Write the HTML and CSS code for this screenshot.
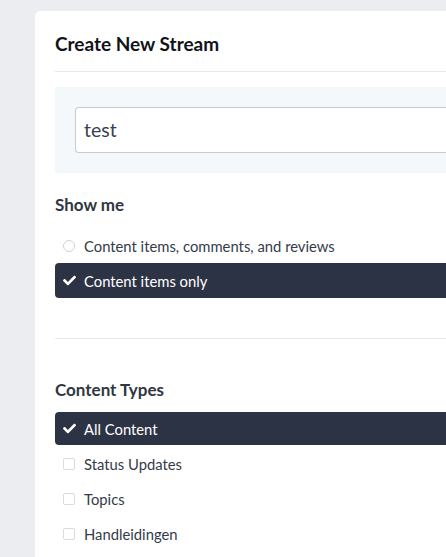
FILE: index.html
```html
<!DOCTYPE html>
<html>
<head>
<meta charset="utf-8">
<link rel="stylesheet" href="styles.css">
</head>
<body>
<div class="page">
  <div class="card">
    <h1 class="title">Create New Stream</h1>
    <div class="namebox">
      <div class="input">test</div>
    </div>
    <h2 class="heading">Show me</h2>
    <ul class="options options-first">
      <li class="opt"><span class="radio"></span><span>Content items, comments, and reviews</span></li>
      <li class="opt opt-on"><svg class="check" viewBox="0 0 512 512"><path d="M173.9 439.4l-166.4-166.4c-10-10-10-26.2 0-36.2l36.2-36.2c10-10 26.2-10 36.2 0L192 312.7 432.1 72.6c10-10 26.2-10 36.2 0l36.2 36.2c10 10 10 26.2 0 36.2l-294.4 294.4c-10 10-26.2 10-36.2 0z"/></svg><span>Content items only</span></li>
    </ul>
    <div class="divider"></div>
    <h2 class="heading heading-types">Content Types</h2>
    <ul class="options options-types">
      <li class="opt opt-on opt-short"><svg class="check" viewBox="0 0 512 512"><path d="M173.9 439.4l-166.4-166.4c-10-10-10-26.2 0-36.2l36.2-36.2c10-10 26.2-10 36.2 0L192 312.7 432.1 72.6c10-10 26.2-10 36.2 0l36.2 36.2c10 10 10 26.2 0 36.2l-294.4 294.4c-10 10-26.2 10-36.2 0z"/></svg><span>All Content</span></li>
      <li class="opt"><span class="box"></span><span>Status Updates</span></li>
      <li class="opt"><span class="box"></span><span>Topics</span></li>
      <li class="opt"><span class="box"></span><span>Handleidingen</span></li>
    </ul>
  </div>
</div>
</body>
</html>
```

FILE: styles.css
```css
html, body {
  margin: 0;
  padding: 0;
  background: #ebedf0;
  overflow: hidden;
  font-family: Lato, "Open Sans", sans-serif;
}
.page {
  padding: 11px 0 0 35px;
  height: 557px;
  box-sizing: border-box;
}
.card {
  height: 546px;
  background: #ffffff;
  border-radius: 5px 0 0 0;
  padding: 0 0 0 20px;
  box-sizing: border-box;
  overflow: hidden;
}
.title {
  margin: 0;
  padding: 20px 0 14px;
  font-size: 19px;
  line-height: 26px;
  font-weight: 700;
  color: #111318;
  border-bottom: 1px solid #e8eaed;
}
.namebox {
  margin-top: 15px;
  background: #f5f8fb;
  padding: 20px 0 20px 20px;
}
.input {
  height: 44px;
  line-height: 44px;
  border: 1px solid #c6cbd2;
  border-right: none;
  border-radius: 4px 0 0 4px;
  background: #fff;
  padding: 0 8px;
  font-size: 19.5px;
  color: #3a4150;
}
.heading {
  margin: 22px 0 0;
  font-size: 17px;
  line-height: 20px;
  font-weight: 700;
  color: #30363f;
}
.heading-types {
  margin-top: 41px;
}
.options {
  list-style: none;
  margin: 13px 0 0;
  padding: 0;
}
.options-types {
  margin-top: 12px;
}
.opt {
  display: flex;
  align-items: center;
  gap: 8px;
  height: 35px;
  padding-left: 8px;
  font-size: 14.8px;
  color: #353b48;
}
.opt-on {
  background: #2c3345;
  color: #ffffff;
  border-radius: 4px 0 0 4px;
}
.opt-short {
  height: 33px;
  margin-bottom: 1px;
}
.radio {
  width: 10px;
  height: 10px;
  border: 1px solid #cfd2d6;
  border-radius: 50%;
  margin-right: 1px;
}
.box {
  width: 10px;
  height: 10px;
  border: 1px solid #d8dbe0;
  border-radius: 2px;
  margin-right: 1px;
}
.check {
  width: 13px;
  height: 13px;
  fill: #ffffff;
}
.divider {
  margin-top: 40px;
  border-top: 1px solid #e8eaed;
}
```
